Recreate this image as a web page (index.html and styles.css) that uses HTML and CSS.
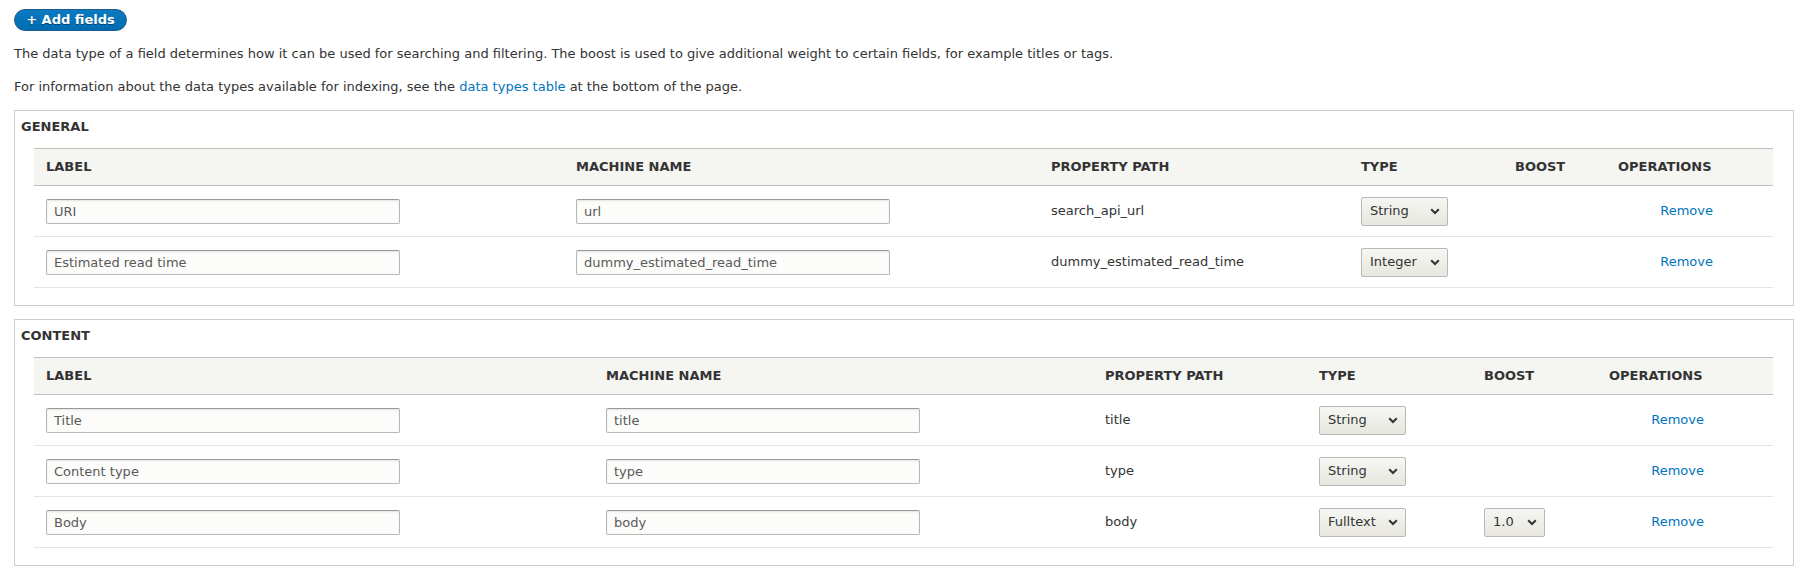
FILE: index.html
```html
<!DOCTYPE html>
<html lang="en">
<head>
<meta charset="utf-8">
<title>Fields</title>
<link rel="stylesheet" href="styles.css">
</head>
<body>
<div class="page">
  <div class="actions"><a class="button-primary" href="#">+ Add fields</a></div>
  <p class="intro">The data type of a field determines how it can be used for searching and filtering. The boost is used to give additional weight to certain fields, for example titles or tags.</p>
  <p class="intro">For information about the data types available for indexing, see the <a class="link" href="#">data types table</a> at the bottom of the page.</p>

  <section class="fieldset">
    <div class="fieldset-title">General</div>
    <div class="table-wrap">
      <table class="fields">
        <colgroup>
          <col class="g1"><col class="g2"><col class="g3"><col class="g4"><col class="g5"><col class="c6"><col class="g7">
        </colgroup>
        <thead>
          <tr><th>Label</th><th>Machine name</th><th>Property path</th><th>Type</th><th>Boost</th><th>Operations</th><th></th></tr>
        </thead>
        <tbody>
          <tr>
            <td><input class="input input-label" type="text" value="URI"></td>
            <td><input class="input input-machine" type="text" value="url"></td>
            <td>search_api_url</td>
            <td><span class="select select-type"><span>String</span><svg class="chev" width="10" height="7" viewBox="0 0 10 7"><path d="M1.2 1.3 L5 5 L8.8 1.3" fill="none" stroke="#333" stroke-width="2"/></svg></span></td>
            <td></td>
            <td class="ops"><a class="link" href="#">Remove</a></td>
            <td></td>
          </tr>
          <tr>
            <td><input class="input input-label" type="text" value="Estimated read time"></td>
            <td><input class="input input-machine" type="text" value="dummy_estimated_read_time"></td>
            <td>dummy_estimated_read_time</td>
            <td><span class="select select-type"><span>Integer</span><svg class="chev" width="10" height="7" viewBox="0 0 10 7"><path d="M1.2 1.3 L5 5 L8.8 1.3" fill="none" stroke="#333" stroke-width="2"/></svg></span></td>
            <td></td>
            <td class="ops"><a class="link" href="#">Remove</a></td>
            <td></td>
          </tr>
        </tbody>
      </table>
    </div>
  </section>

  <section class="fieldset">
    <div class="fieldset-title">Content</div>
    <div class="table-wrap">
      <table class="fields">
        <colgroup>
          <col class="k1"><col class="k2"><col class="k3"><col class="k4"><col class="k5"><col class="c6"><col class="k7">
        </colgroup>
        <thead>
          <tr><th>Label</th><th>Machine name</th><th>Property path</th><th>Type</th><th>Boost</th><th>Operations</th><th></th></tr>
        </thead>
        <tbody>
          <tr>
            <td><input class="input input-label" type="text" value="Title"></td>
            <td><input class="input input-machine" type="text" value="title"></td>
            <td>title</td>
            <td><span class="select select-type"><span>String</span><svg class="chev" width="10" height="7" viewBox="0 0 10 7"><path d="M1.2 1.3 L5 5 L8.8 1.3" fill="none" stroke="#333" stroke-width="2"/></svg></span></td>
            <td></td>
            <td class="ops"><a class="link" href="#">Remove</a></td>
            <td></td>
          </tr>
          <tr>
            <td><input class="input input-label" type="text" value="Content type"></td>
            <td><input class="input input-machine" type="text" value="type"></td>
            <td>type</td>
            <td><span class="select select-type"><span>String</span><svg class="chev" width="10" height="7" viewBox="0 0 10 7"><path d="M1.2 1.3 L5 5 L8.8 1.3" fill="none" stroke="#333" stroke-width="2"/></svg></span></td>
            <td></td>
            <td class="ops"><a class="link" href="#">Remove</a></td>
            <td></td>
          </tr>
          <tr>
            <td><input class="input input-label" type="text" value="Body"></td>
            <td><input class="input input-machine" type="text" value="body"></td>
            <td>body</td>
            <td><span class="select select-type"><span>Fulltext</span><svg class="chev" width="10" height="7" viewBox="0 0 10 7"><path d="M1.2 1.3 L5 5 L8.8 1.3" fill="none" stroke="#333" stroke-width="2"/></svg></span></td>
            <td><span class="select select-boost"><span>1.0</span><svg class="chev" width="10" height="7" viewBox="0 0 10 7"><path d="M1.2 1.3 L5 5 L8.8 1.3" fill="none" stroke="#333" stroke-width="2"/></svg></span></td>
            <td class="ops"><a class="link" href="#">Remove</a></td>
            <td></td>
          </tr>
        </tbody>
      </table>
    </div>
  </section>
</div>
</body>
</html>
```

FILE: styles.css
```css
html, body {
  margin: 0;
  padding: 0;
  background: #fff;
}

body {
  font-family: "DejaVu Sans", Verdana, sans-serif;
  font-size: 13px;
  line-height: 20px;
  color: #333;
}

.page {
  padding: 9px 11px 0 14px;
}

.actions {
  display: flex;
}

.button-primary {
  display: inline-flex;
  align-items: center;
  justify-content: center;
  box-sizing: border-box;
  height: 22px;
  width: 113px;
  padding: 0 8px;
  border: 1px solid #1e5c90;
  border-radius: 20px;
  background: linear-gradient(to bottom, #0a7ac1, #006cb0);
  color: #fff;
  font-weight: bold;
  font-size: 13px;
  line-height: 20px;
  white-space: nowrap;
  text-decoration: none;
  text-shadow: 0 1px rgba(0, 0, 0, 0.4);
}

.intro {
  margin: 13px 0;
}

.link {
  color: #0074bd;
  text-decoration: none;
}

.fieldset {
  border: 1px solid #ccc;
  margin: 13px 0 13px;
  padding: 6px 0 17px;
}

.fieldset-title {
  padding-left: 6px;
  font-weight: bold;
  text-transform: uppercase;
  line-height: 20px;
  margin-bottom: 11px;
}

.table-wrap {
  margin: 0 20px 0 19px;
}

.fields {
  width: 1739px;
  table-layout: fixed;
  border-collapse: collapse;
}

.g1 { width: 530px; }
.g2 { width: 475px; }
.g3 { width: 310px; }
.g4 { width: 154px; }
.g5 { width: 103px; }
.g7 { width: 48px; }

.k1 { width: 560px; }
.k2 { width: 499px; }
.k3 { width: 214px; }
.k4 { width: 165px; }
.k5 { width: 125px; }
.k7 { width: 57px; }

.c6 { width: 119px; }

.fields th {
  background: #f5f5f2;
  border-top: 1px solid #bfbfba;
  border-bottom: 1px solid #bfbfba;
  padding: 8px 12px;
  text-align: left;
  text-transform: uppercase;
  font-weight: bold;
  color: #333;
  white-space: nowrap;
}

.fields td {
  border-bottom: 1px solid #e6e4df;
  padding: 10px 12px;
  height: 30px;
  vertical-align: middle;
  white-space: nowrap;
}

.fields td.ops {
  text-align: right;
}

.input {
  display: block;
  box-sizing: border-box;
  height: 25px;
  padding: 0 7px;
  margin: 0;
  border: 1px solid #b8b8b8;
  border-top-color: #999;
  border-radius: 2px;
  background: #fcfcfa;
  box-shadow: inset 0 1px 2px rgba(0, 0, 0, 0.1);
  font-family: "DejaVu Sans", Verdana, sans-serif;
  font-size: 13px;
  color: #595959;
}

.input-label { width: 354px; }
.input-machine { width: 314px; }

.select {
  display: flex;
  align-items: center;
  justify-content: space-between;
  box-sizing: border-box;
  height: 29px;
  padding: 0 7px 0 8px;
  border: 1px solid #b8b8b8;
  border-radius: 2px;
  background: linear-gradient(to bottom, #f6f6f3, #e7e7df);
  color: #333;
}

.select-type { width: 87px; }
.select-boost { width: 61px; }

.chev {
  display: block;
  flex: none;
}
```
